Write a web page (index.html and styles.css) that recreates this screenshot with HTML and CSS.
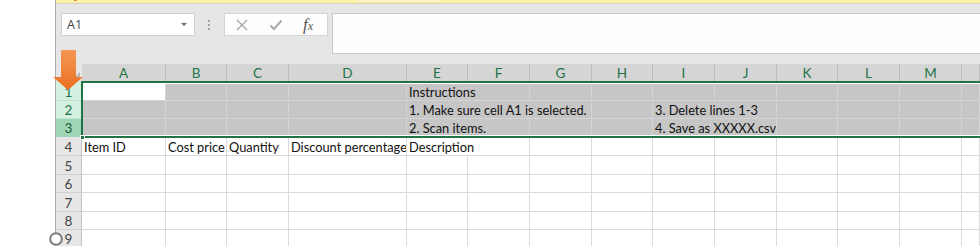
FILE: index.html
```html
<!DOCTYPE html>
<html lang="en">
<head>
<meta charset="utf-8">
<title>Sheet</title>
<link rel="stylesheet" href="styles.css">
</head>
<body>
<div class="gutter"></div>
<div class="app">
  <div class="msgbar"><span class="msg-dot"></span><span class="msg-btn"></span></div>
  <div class="msgbar-shadow"></div>
  <div class="fbar">
    <div class="namebox"><span>A1</span><span class="caret"></span></div>
    <div class="grip"><i></i><i></i><i></i></div>
    <div class="fbtns">
      <svg class="ico" width="14" height="14" viewBox="0 0 14 14"><path d="M2 2 L12 12 M12 2 L2 12" stroke="#a9a9a9" stroke-width="1.4" fill="none"/></svg>
      <svg class="ico" width="14" height="14" viewBox="0 0 14 14"><path d="M1.5 7.5 L5 11 L12.5 2.5" stroke="#a9a9a9" stroke-width="1.9" fill="none"/></svg>
      <span class="fx">f<small>x</small></span>
    </div>
    <div class="finput"></div>
  </div>
  <div class="sheet">
    <div class="r hdr">
      <div class="corner"><span class="tri"></span></div>
      <div class="ch">A</div><div class="ch">B</div><div class="ch">C</div><div class="ch">D</div><div class="ch">E</div><div class="ch">F</div><div class="ch">G</div><div class="ch">H</div><div class="ch">I</div><div class="ch">J</div><div class="ch">K</div><div class="ch">L</div><div class="ch">M</div><div class="ch"></div>
    </div>
    <div class="r h19 sel">
      <div class="rh rh-sel">1</div>
      <div class="c active"></div><div class="c"></div><div class="c"></div><div class="c"></div><div class="c s2">Instructions</div><div class="c"></div><div class="c"></div><div class="c"></div><div class="c"></div><div class="c"></div><div class="c"></div><div class="c"></div><div class="c"></div>
    </div>
    <div class="r h18 sel">
      <div class="rh rh-sel">2</div>
      <div class="c"></div><div class="c"></div><div class="c"></div><div class="c"></div><div class="c s3">1. Make sure cell A1 is selected.</div><div class="c"></div><div class="c s2">3. Delete lines 1-3</div><div class="c"></div><div class="c"></div><div class="c"></div><div class="c"></div>
    </div>
    <div class="r h18 sel">
      <div class="rh rh-cur">3</div>
      <div class="c"></div><div class="c"></div><div class="c"></div><div class="c"></div><div class="c s2">2. Scan items.</div><div class="c"></div><div class="c"></div><div class="c s2">4. Save as XXXXX.csv</div><div class="c"></div><div class="c"></div><div class="c"></div><div class="c"></div>
    </div>
    <div class="r h19">
      <div class="rh">4</div>
      <div class="c">Item ID</div><div class="c">Cost price</div><div class="c">Quantity</div><div class="c">Discount percentage</div><div class="c s2">Description</div><div class="c"></div><div class="c"></div><div class="c"></div><div class="c"></div><div class="c"></div><div class="c"></div><div class="c"></div><div class="c"></div>
    </div>
    <div class="r h19">
      <div class="rh">5</div>
      <div class="c"></div><div class="c"></div><div class="c"></div><div class="c"></div><div class="c"></div><div class="c"></div><div class="c"></div><div class="c"></div><div class="c"></div><div class="c"></div><div class="c"></div><div class="c"></div><div class="c"></div><div class="c"></div>
    </div>
    <div class="r h18">
      <div class="rh">6</div>
      <div class="c"></div><div class="c"></div><div class="c"></div><div class="c"></div><div class="c"></div><div class="c"></div><div class="c"></div><div class="c"></div><div class="c"></div><div class="c"></div><div class="c"></div><div class="c"></div><div class="c"></div><div class="c"></div>
    </div>
    <div class="r h19">
      <div class="rh">7</div>
      <div class="c"></div><div class="c"></div><div class="c"></div><div class="c"></div><div class="c"></div><div class="c"></div><div class="c"></div><div class="c"></div><div class="c"></div><div class="c"></div><div class="c"></div><div class="c"></div><div class="c"></div><div class="c"></div>
    </div>
    <div class="r h18">
      <div class="rh">8</div>
      <div class="c"></div><div class="c"></div><div class="c"></div><div class="c"></div><div class="c"></div><div class="c"></div><div class="c"></div><div class="c"></div><div class="c"></div><div class="c"></div><div class="c"></div><div class="c"></div><div class="c"></div><div class="c"></div>
    </div>
    <div class="r h18">
      <div class="rh">9</div>
      <div class="c"></div><div class="c"></div><div class="c"></div><div class="c"></div><div class="c"></div><div class="c"></div><div class="c"></div><div class="c"></div><div class="c"></div><div class="c"></div><div class="c"></div><div class="c"></div><div class="c"></div><div class="c"></div>
    </div>
    <div class="selection"><span class="handle"></span></div>
  </div>
</div>
<svg class="arrow" width="32" height="42" viewBox="0 0 32 42">
  <defs>
    <linearGradient id="og" x1="0" y1="0" x2="0" y2="1">
      <stop offset="0" stop-color="#f39853"/>
      <stop offset="1" stop-color="#ec6f22"/>
    </linearGradient>
  </defs>
  <path d="M9 1 H24 V28 H31 L16 41 L1 28 H9 Z" fill="url(#og)"/>
</svg>
<svg class="ring" width="16" height="16" viewBox="0 0 16 16"><circle cx="8" cy="8" r="5.8" fill="#fff" stroke="#7b7b7b" stroke-width="2"/></svg>
</body>
</html>
```

FILE: styles.css
```css
* { box-sizing: border-box; margin: 0; padding: 0; }
html, body { width: 980px; height: 246px; overflow: hidden; background: #fff; }
body { display: flex; font-family: Lato, "Liberation Sans", sans-serif; position: relative; }

.gutter { width: 56px; flex: none; background: #fff; border-right: 1px solid #ababab; }

.app { flex: 1; min-width: 0; display: flex; flex-direction: column; background: #e6e6e6; }

.msgbar { height: 3px; flex: none; background: #fdf1a7; position: relative; }
.msg-dot { position: absolute; left: 18px; top: 0; width: 3px; height: 1px; background: #e8883a; }
.msg-btn { position: absolute; left: 301px; top: 0; width: 83px; height: 1px; background: #fbf6d8; }
.msgbar-shadow { height: 1px; flex: none; background: #d5d2bf; }

.fbar { height: 60px; flex: none; display: flex; align-items: flex-start; padding: 9px 0 0 5px; }
.namebox { width: 134px; height: 23px; background: #fff; border: 1px solid #cfcfcf; display: flex; align-items: center; justify-content: space-between; padding: 0 7px 0 5px; font-family: "Open Sans", "Noto Sans", sans-serif; font-size: 12.5px; color: #444; }
.caret { width: 0; height: 0; border-left: 3px solid transparent; border-right: 3px solid transparent; border-top: 3px solid #6e6e6e; }
.grip { margin-left: 13px; height: 23px; display: flex; flex-direction: column; justify-content: center; gap: 2px; }
.grip i { display: block; width: 2px; height: 2px; background: #a3a3a3; }
.fbtns { margin-left: 14px; width: 104px; height: 23px; background: #fdfdfd; border: 1px solid #d6d6d6; display: flex; align-items: center; padding-left: 10px; gap: 20px; }
.ico { flex: none; }
.fx { font-family: "Liberation Serif", serif; font-style: italic; font-size: 17px; color: #555; line-height: 1; }
.fx small { font-size: 12px; }
.finput { margin-left: 4px; flex: 1; height: 41px; margin-right: -6px; background: #fdfdfd; border: 1px solid #c9c9c9; }

.sheet { position: relative; flex: 1; background: #fff; }
.r { display: grid; grid-template-columns: 26px 84px 61px 62px 118px 61px 62px 62px 61px 62px 62px 61px 62px 62px 1fr; font-size: 12.8px; }
.hdr { height: 18px; background: #e6e6e6; }
.h18 { height: 18px; }
.h19 { height: 19px; }

.corner { position: relative; background: #e6e6e6; }
.tri { position: absolute; right: 2px; bottom: 2px; width: 0; height: 0; border-left: 8px solid transparent; border-bottom: 8px solid #b7b7b7; }
.ch { background: #d5d5d5; border-right: 1px solid #bdbdbd; color: #217346; display: flex; align-items: center; justify-content: center; line-height: 15px; font-size: 13.5px; }

.rh { background: #e6e6e6; border-right: 1px solid #c2c2c2; border-bottom: 1px solid #d2d2d2; color: #444; display: flex; align-items: flex-end; justify-content: center; line-height: 15px; font-size: 13.5px; }
.rh-sel { background: #d3f0e0; color: #217346; border-bottom-color: #bfe3cf; }
.rh-cur { background: #9fd5b7; color: #1a5c36; border-bottom-color: #9fd5b7; }

.c { border-right: 1px solid #dadada; border-bottom: 1px solid #dadada; color: #111; white-space: nowrap; overflow: hidden; display: flex; align-items: flex-end; padding-left: 2px; line-height: 15px; }
.sel .c { background: #c6c6c6; border-color: #d4d4d4; }
.sel .c.active { background: #fff; }
.s2 { grid-column: span 2; }
.s3 { grid-column: span 3; }

.selection { position: absolute; left: 25px; right: -10px; top: 17px; height: 57px; border: 2px solid #217346; box-shadow: inset 0 1px 0 #fff, inset 0 -1px 0 #fff; }
.handle { position: absolute; left: -3px; bottom: -4px; width: 5px; height: 5px; background: #217346; border: 1px solid #fff; }

.arrow { position: absolute; left: 52px; top: 49px; }
.ring { position: absolute; left: 48px; top: 231px; }
```
